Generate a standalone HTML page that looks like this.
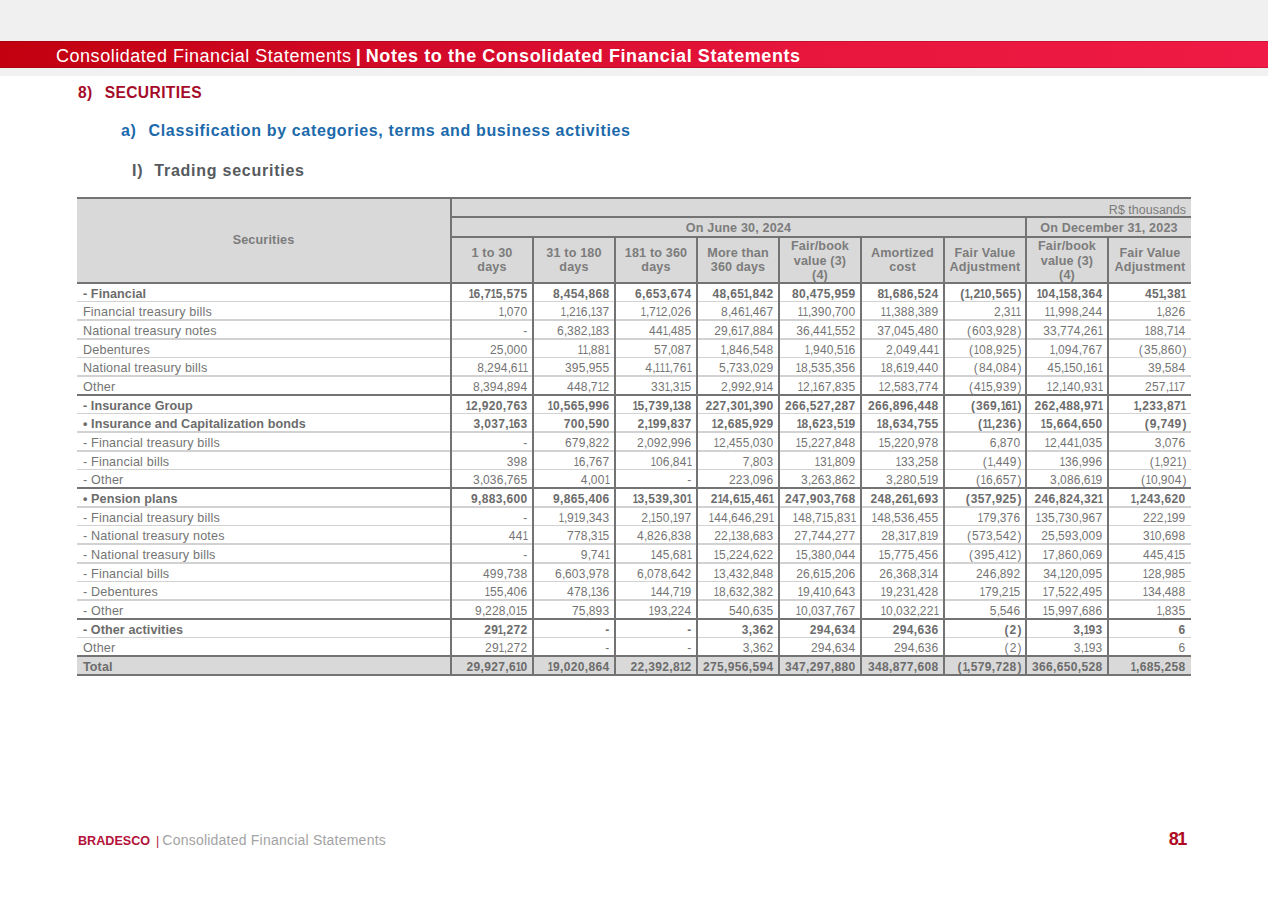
<!DOCTYPE html>
<html><head><meta charset="utf-8"><style>
*{margin:0;padding:0;box-sizing:border-box}
html,body{width:1268px;height:899px;overflow:hidden;background:#fff;position:relative}
body{font-family:"Liberation Sans",sans-serif;}
.a{position:absolute;white-space:nowrap}
.hl{position:absolute;left:77px;width:1114px}
.vl{position:absolute;width:2px;background:#737373}
.lab{position:absolute;left:83px;font-size:12.6px;color:#747474;white-space:nowrap;line-height:15px;letter-spacing:0.18px}
.lab.b{letter-spacing:0.08px}
.num{position:absolute;font-size:12px;color:#747474;white-space:nowrap;text-align:right;line-height:15px;letter-spacing:0.26px}
.num i{font-style:normal}
.num .o{display:inline-block;transform:scaleX(0.8);margin:0 -0.9px;letter-spacing:0}
.num .c{letter-spacing:-0.41px}
.num .po{letter-spacing:1.1px}
.num .pc{margin-left:1px;letter-spacing:-1.1px}
.b{font-weight:bold;color:#6c6c6c}
.nb{letter-spacing:0.33px}
.nb .o{margin:0 -1.15px}
.nb .c{letter-spacing:0.4px}

.hd{position:absolute;font-size:12.6px;font-weight:bold;color:#7c7c7c;text-align:center;line-height:14.5px;white-space:nowrap;letter-spacing:0.15px}
</style></head><body>

<div class="a" style="left:0;top:0;width:1268px;height:41px;background:#f0f0f0"></div>
<div class="a" style="left:0;top:41px;width:1268px;height:27px;background:linear-gradient(90deg,#c2000f 0%,#d40a2a 35%,#e8163d 65%,#ef1a45 100%);box-shadow:inset 0 1px 0 rgba(90,0,10,.22),inset 0 -1px 0 rgba(90,0,10,.22)"></div>
<div class="a" style="left:0;top:68px;width:1268px;height:8px;background:#f1f1f1"></div>
<div class="a" style="left:56px;top:45px;line-height:22px;font-size:18px;color:#fff;letter-spacing:0.53px">Consolidated Financial Statements<span style="margin-left:4px;font-weight:bold">|</span><b style="letter-spacing:0.585px;margin-left:4.5px">Notes to the Consolidated Financial Statements</b></div>
<div class="a" style="left:78px;top:83.6px;line-height:18px;font-size:15.6px;font-weight:bold;color:#a50c29;letter-spacing:0.38px">8)<span style="display:inline-block;width:12px"></span>SECURITIES</div>
<div class="a" style="left:121px;top:121px;line-height:20px;font-size:16px;font-weight:bold;color:#1c6aab;letter-spacing:0.65px">a)<span style="display:inline-block;width:12px"></span>Classification by categories, terms and business activities</div>
<div class="a" style="left:132px;top:160.5px;line-height:20px;font-size:16px;font-weight:bold;color:#565a5e;letter-spacing:0.75px">I)<span style="display:inline-block;width:11px"></span>Trading securities</div>
<div class="a" style="left:77px;top:197px;width:1114px;height:86px;background:#d9d9d9"></div>
<div class="a" style="left:77px;top:655px;width:1114px;height:20px;background:#d9d9d9"></div>
<div class="hl" style="top:197px;height:2px;background:#737373"></div>
<div class="a" style="left:450px;top:216px;width:741px;height:2px;background:#737373"></div>
<div class="a" style="left:450px;top:236px;width:741px;height:2px;background:#737373"></div>
<div class="hl" style="top:282px;height:2px;background:#737373"></div>
<div class="hl" style="top:300.67px;height:1.5px;background:#d2d2d2"></div>
<div class="hl" style="top:319.34px;height:1.5px;background:#d2d2d2"></div>
<div class="hl" style="top:338.01px;height:1.5px;background:#d2d2d2"></div>
<div class="hl" style="top:356.68px;height:1.5px;background:#d2d2d2"></div>
<div class="hl" style="top:375.35px;height:1.5px;background:#d2d2d2"></div>
<div class="hl" style="top:393.52px;height:2px;background:#737373"></div>
<div class="hl" style="top:412.69px;height:1.5px;background:#d2d2d2"></div>
<div class="hl" style="top:431.36px;height:1.5px;background:#d2d2d2"></div>
<div class="hl" style="top:450.03px;height:1.5px;background:#d2d2d2"></div>
<div class="hl" style="top:468.70px;height:1.5px;background:#d2d2d2"></div>
<div class="hl" style="top:486.87px;height:2px;background:#737373"></div>
<div class="hl" style="top:506.04px;height:1.5px;background:#d2d2d2"></div>
<div class="hl" style="top:524.71px;height:1.5px;background:#d2d2d2"></div>
<div class="hl" style="top:543.38px;height:1.5px;background:#d2d2d2"></div>
<div class="hl" style="top:562.05px;height:1.5px;background:#d2d2d2"></div>
<div class="hl" style="top:580.72px;height:1.5px;background:#d2d2d2"></div>
<div class="hl" style="top:599.39px;height:1.5px;background:#d2d2d2"></div>
<div class="hl" style="top:617.56px;height:2px;background:#737373"></div>
<div class="hl" style="top:636.73px;height:1.5px;background:#d2d2d2"></div>
<div class="hl" style="top:654.90px;height:2px;background:#737373"></div>
<div class="hl" style="top:673.57px;height:2px;background:#737373"></div>
<div class="vl" style="left:450px;top:197px;height:479px"></div>
<div class="vl" style="left:532px;top:236px;height:440px"></div>
<div class="vl" style="left:614px;top:236px;height:440px"></div>
<div class="vl" style="left:696px;top:236px;height:440px"></div>
<div class="vl" style="left:778px;top:236px;height:440px"></div>
<div class="vl" style="left:860px;top:236px;height:440px"></div>
<div class="vl" style="left:943px;top:236px;height:440px"></div>
<div class="vl" style="left:1025px;top:216px;height:460px"></div>
<div class="vl" style="left:1107px;top:236px;height:440px"></div>
<div class="hd" style="left:77px;top:233px;width:373px">Securities</div>
<div class="a" style="left:1000px;top:203.3px;width:186px;text-align:right;font-size:12.5px;color:#7c7c7c;line-height:14px">R$ thousands</div>
<div class="hd" style="left:452px;top:220.7px;width:573px">On June 30, 2024</div>
<div class="hd" style="left:1027px;top:220.7px;width:164px">On December 31, 2023</div>
<div class="hd" style="left:452px;top:245.8px;width:80px">1 to 30<br>days</div>
<div class="hd" style="left:534px;top:245.8px;width:80px">31 to 180<br>days</div>
<div class="hd" style="left:616px;top:245.8px;width:80px">181 to 360<br>days</div>
<div class="hd" style="left:698px;top:245.8px;width:80px">More than<br>360 days</div>
<div class="hd" style="left:780px;top:239.05px;width:80px">Fair/book<br>value (3)<br>(4)</div>
<div class="hd" style="left:862px;top:245.8px;width:81px">Amortized<br>cost</div>
<div class="hd" style="left:945px;top:245.8px;width:80px">Fair Value<br>Adjustment</div>
<div class="hd" style="left:1027px;top:239.05px;width:80px">Fair/book<br>value (3)<br>(4)</div>
<div class="hd" style="left:1109px;top:245.8px;width:82px">Fair Value<br>Adjustment</div>
<div class="lab b" style="top:286.50px">- Financial</div>
<div class="num b nb" style="top:286.50px;left:450px;width:77.5px"><i class="o">1</i>6<i class="c">,</i>7<i class="o">1</i>5<i class="c">,</i>575</div>
<div class="num b nb" style="top:286.50px;left:532px;width:77.5px">8<i class="c">,</i>454<i class="c">,</i>868</div>
<div class="num b nb" style="top:286.50px;left:614px;width:77.5px">6<i class="c">,</i>653<i class="c">,</i>674</div>
<div class="num b nb" style="top:286.50px;left:696px;width:77.5px">48<i class="c">,</i>65<i class="o">1</i><i class="c">,</i>842</div>
<div class="num b nb" style="top:286.50px;left:778px;width:77.5px">80<i class="c">,</i>475<i class="c">,</i>959</div>
<div class="num b nb" style="top:286.50px;left:860px;width:78.5px">8<i class="o">1</i><i class="c">,</i>686<i class="c">,</i>524</div>
<div class="num b nb" style="top:286.50px;left:943px;width:77.5px"><i class="po">(</i><i class="o">1</i><i class="c">,</i>2<i class="o">1</i>0<i class="c">,</i>565<i class="pc">)</i></div>
<div class="num b nb" style="top:286.50px;left:1025px;width:77.5px"><i class="o">1</i>04<i class="c">,</i><i class="o">1</i>58<i class="c">,</i>364</div>
<div class="num b nb" style="top:286.50px;left:1107px;width:78.5px">45<i class="o">1</i><i class="c">,</i>38<i class="o">1</i></div>
<div class="lab" style="top:305.17px">Financial treasury bills</div>
<div class="num" style="top:305.17px;left:450px;width:77.5px"><i class="o">1</i><i class="c">,</i>070</div>
<div class="num" style="top:305.17px;left:532px;width:77.5px"><i class="o">1</i><i class="c">,</i>2<i class="o">1</i>6<i class="c">,</i><i class="o">1</i>37</div>
<div class="num" style="top:305.17px;left:614px;width:77.5px"><i class="o">1</i><i class="c">,</i>7<i class="o">1</i>2<i class="c">,</i>026</div>
<div class="num" style="top:305.17px;left:696px;width:77.5px">8<i class="c">,</i>46<i class="o">1</i><i class="c">,</i>467</div>
<div class="num" style="top:305.17px;left:778px;width:77.5px"><i class="o">1</i><i class="o">1</i><i class="c">,</i>390<i class="c">,</i>700</div>
<div class="num" style="top:305.17px;left:860px;width:78.5px"><i class="o">1</i><i class="o">1</i><i class="c">,</i>388<i class="c">,</i>389</div>
<div class="num" style="top:305.17px;left:943px;width:77.5px">2<i class="c">,</i>3<i class="o">1</i><i class="o">1</i></div>
<div class="num" style="top:305.17px;left:1025px;width:77.5px"><i class="o">1</i><i class="o">1</i><i class="c">,</i>998<i class="c">,</i>244</div>
<div class="num" style="top:305.17px;left:1107px;width:78.5px"><i class="o">1</i><i class="c">,</i>826</div>
<div class="lab" style="top:323.84px">National treasury notes</div>
<div class="num" style="top:323.84px;left:450px;width:77.5px">-</div>
<div class="num" style="top:323.84px;left:532px;width:77.5px">6<i class="c">,</i>382<i class="c">,</i><i class="o">1</i>83</div>
<div class="num" style="top:323.84px;left:614px;width:77.5px">44<i class="o">1</i><i class="c">,</i>485</div>
<div class="num" style="top:323.84px;left:696px;width:77.5px">29<i class="c">,</i>6<i class="o">1</i>7<i class="c">,</i>884</div>
<div class="num" style="top:323.84px;left:778px;width:77.5px">36<i class="c">,</i>44<i class="o">1</i><i class="c">,</i>552</div>
<div class="num" style="top:323.84px;left:860px;width:78.5px">37<i class="c">,</i>045<i class="c">,</i>480</div>
<div class="num" style="top:323.84px;left:943px;width:77.5px"><i class="po">(</i>603<i class="c">,</i>928<i class="pc">)</i></div>
<div class="num" style="top:323.84px;left:1025px;width:77.5px">33<i class="c">,</i>774<i class="c">,</i>26<i class="o">1</i></div>
<div class="num" style="top:323.84px;left:1107px;width:78.5px"><i class="o">1</i>88<i class="c">,</i>7<i class="o">1</i>4</div>
<div class="lab" style="top:342.51px">Debentures</div>
<div class="num" style="top:342.51px;left:450px;width:77.5px">25<i class="c">,</i>000</div>
<div class="num" style="top:342.51px;left:532px;width:77.5px"><i class="o">1</i><i class="o">1</i><i class="c">,</i>88<i class="o">1</i></div>
<div class="num" style="top:342.51px;left:614px;width:77.5px">57<i class="c">,</i>087</div>
<div class="num" style="top:342.51px;left:696px;width:77.5px"><i class="o">1</i><i class="c">,</i>846<i class="c">,</i>548</div>
<div class="num" style="top:342.51px;left:778px;width:77.5px"><i class="o">1</i><i class="c">,</i>940<i class="c">,</i>5<i class="o">1</i>6</div>
<div class="num" style="top:342.51px;left:860px;width:78.5px">2<i class="c">,</i>049<i class="c">,</i>44<i class="o">1</i></div>
<div class="num" style="top:342.51px;left:943px;width:77.5px"><i class="po">(</i><i class="o">1</i>08<i class="c">,</i>925<i class="pc">)</i></div>
<div class="num" style="top:342.51px;left:1025px;width:77.5px"><i class="o">1</i><i class="c">,</i>094<i class="c">,</i>767</div>
<div class="num" style="top:342.51px;left:1107px;width:78.5px"><i class="po">(</i>35<i class="c">,</i>860<i class="pc">)</i></div>
<div class="lab" style="top:361.18px">National treasury bills</div>
<div class="num" style="top:361.18px;left:450px;width:77.5px">8<i class="c">,</i>294<i class="c">,</i>6<i class="o">1</i><i class="o">1</i></div>
<div class="num" style="top:361.18px;left:532px;width:77.5px">395<i class="c">,</i>955</div>
<div class="num" style="top:361.18px;left:614px;width:77.5px">4<i class="c">,</i><i class="o">1</i><i class="o">1</i><i class="o">1</i><i class="c">,</i>76<i class="o">1</i></div>
<div class="num" style="top:361.18px;left:696px;width:77.5px">5<i class="c">,</i>733<i class="c">,</i>029</div>
<div class="num" style="top:361.18px;left:778px;width:77.5px"><i class="o">1</i>8<i class="c">,</i>535<i class="c">,</i>356</div>
<div class="num" style="top:361.18px;left:860px;width:78.5px"><i class="o">1</i>8<i class="c">,</i>6<i class="o">1</i>9<i class="c">,</i>440</div>
<div class="num" style="top:361.18px;left:943px;width:77.5px"><i class="po">(</i>84<i class="c">,</i>084<i class="pc">)</i></div>
<div class="num" style="top:361.18px;left:1025px;width:77.5px">45<i class="c">,</i><i class="o">1</i>50<i class="c">,</i><i class="o">1</i>6<i class="o">1</i></div>
<div class="num" style="top:361.18px;left:1107px;width:78.5px">39<i class="c">,</i>584</div>
<div class="lab" style="top:379.85px">Other</div>
<div class="num" style="top:379.85px;left:450px;width:77.5px">8<i class="c">,</i>394<i class="c">,</i>894</div>
<div class="num" style="top:379.85px;left:532px;width:77.5px">448<i class="c">,</i>7<i class="o">1</i>2</div>
<div class="num" style="top:379.85px;left:614px;width:77.5px">33<i class="o">1</i><i class="c">,</i>3<i class="o">1</i>5</div>
<div class="num" style="top:379.85px;left:696px;width:77.5px">2<i class="c">,</i>992<i class="c">,</i>9<i class="o">1</i>4</div>
<div class="num" style="top:379.85px;left:778px;width:77.5px"><i class="o">1</i>2<i class="c">,</i><i class="o">1</i>67<i class="c">,</i>835</div>
<div class="num" style="top:379.85px;left:860px;width:78.5px"><i class="o">1</i>2<i class="c">,</i>583<i class="c">,</i>774</div>
<div class="num" style="top:379.85px;left:943px;width:77.5px"><i class="po">(</i>4<i class="o">1</i>5<i class="c">,</i>939<i class="pc">)</i></div>
<div class="num" style="top:379.85px;left:1025px;width:77.5px"><i class="o">1</i>2<i class="c">,</i><i class="o">1</i>40<i class="c">,</i>93<i class="o">1</i></div>
<div class="num" style="top:379.85px;left:1107px;width:78.5px">257<i class="c">,</i><i class="o">1</i><i class="o">1</i>7</div>
<div class="lab b" style="top:398.52px">- Insurance Group</div>
<div class="num b nb" style="top:398.52px;left:450px;width:77.5px"><i class="o">1</i>2<i class="c">,</i>920<i class="c">,</i>763</div>
<div class="num b nb" style="top:398.52px;left:532px;width:77.5px"><i class="o">1</i>0<i class="c">,</i>565<i class="c">,</i>996</div>
<div class="num b nb" style="top:398.52px;left:614px;width:77.5px"><i class="o">1</i>5<i class="c">,</i>739<i class="c">,</i><i class="o">1</i>38</div>
<div class="num b nb" style="top:398.52px;left:696px;width:77.5px">227<i class="c">,</i>30<i class="o">1</i><i class="c">,</i>390</div>
<div class="num b nb" style="top:398.52px;left:778px;width:77.5px">266<i class="c">,</i>527<i class="c">,</i>287</div>
<div class="num b nb" style="top:398.52px;left:860px;width:78.5px">266<i class="c">,</i>896<i class="c">,</i>448</div>
<div class="num b nb" style="top:398.52px;left:943px;width:77.5px"><i class="po">(</i>369<i class="c">,</i><i class="o">1</i>6<i class="o">1</i><i class="pc">)</i></div>
<div class="num b nb" style="top:398.52px;left:1025px;width:77.5px">262<i class="c">,</i>488<i class="c">,</i>97<i class="o">1</i></div>
<div class="num b nb" style="top:398.52px;left:1107px;width:78.5px"><i class="o">1</i><i class="c">,</i>233<i class="c">,</i>87<i class="o">1</i></div>
<div class="lab b" style="top:417.19px">&bull; Insurance and Capitalization bonds</div>
<div class="num b nb" style="top:417.19px;left:450px;width:77.5px">3<i class="c">,</i>037<i class="c">,</i><i class="o">1</i>63</div>
<div class="num b nb" style="top:417.19px;left:532px;width:77.5px">700<i class="c">,</i>590</div>
<div class="num b nb" style="top:417.19px;left:614px;width:77.5px">2<i class="c">,</i><i class="o">1</i>99<i class="c">,</i>837</div>
<div class="num b nb" style="top:417.19px;left:696px;width:77.5px"><i class="o">1</i>2<i class="c">,</i>685<i class="c">,</i>929</div>
<div class="num b nb" style="top:417.19px;left:778px;width:77.5px"><i class="o">1</i>8<i class="c">,</i>623<i class="c">,</i>5<i class="o">1</i>9</div>
<div class="num b nb" style="top:417.19px;left:860px;width:78.5px"><i class="o">1</i>8<i class="c">,</i>634<i class="c">,</i>755</div>
<div class="num b nb" style="top:417.19px;left:943px;width:77.5px"><i class="po">(</i><i class="o">1</i><i class="o">1</i><i class="c">,</i>236<i class="pc">)</i></div>
<div class="num b nb" style="top:417.19px;left:1025px;width:77.5px"><i class="o">1</i>5<i class="c">,</i>664<i class="c">,</i>650</div>
<div class="num b nb" style="top:417.19px;left:1107px;width:78.5px"><i class="po">(</i>9<i class="c">,</i>749<i class="pc">)</i></div>
<div class="lab" style="top:435.86px">- Financial treasury bills</div>
<div class="num" style="top:435.86px;left:450px;width:77.5px">-</div>
<div class="num" style="top:435.86px;left:532px;width:77.5px">679<i class="c">,</i>822</div>
<div class="num" style="top:435.86px;left:614px;width:77.5px">2<i class="c">,</i>092<i class="c">,</i>996</div>
<div class="num" style="top:435.86px;left:696px;width:77.5px"><i class="o">1</i>2<i class="c">,</i>455<i class="c">,</i>030</div>
<div class="num" style="top:435.86px;left:778px;width:77.5px"><i class="o">1</i>5<i class="c">,</i>227<i class="c">,</i>848</div>
<div class="num" style="top:435.86px;left:860px;width:78.5px"><i class="o">1</i>5<i class="c">,</i>220<i class="c">,</i>978</div>
<div class="num" style="top:435.86px;left:943px;width:77.5px">6<i class="c">,</i>870</div>
<div class="num" style="top:435.86px;left:1025px;width:77.5px"><i class="o">1</i>2<i class="c">,</i>44<i class="o">1</i><i class="c">,</i>035</div>
<div class="num" style="top:435.86px;left:1107px;width:78.5px">3<i class="c">,</i>076</div>
<div class="lab" style="top:454.53px">- Financial bills</div>
<div class="num" style="top:454.53px;left:450px;width:77.5px">398</div>
<div class="num" style="top:454.53px;left:532px;width:77.5px"><i class="o">1</i>6<i class="c">,</i>767</div>
<div class="num" style="top:454.53px;left:614px;width:77.5px"><i class="o">1</i>06<i class="c">,</i>84<i class="o">1</i></div>
<div class="num" style="top:454.53px;left:696px;width:77.5px">7<i class="c">,</i>803</div>
<div class="num" style="top:454.53px;left:778px;width:77.5px"><i class="o">1</i>3<i class="o">1</i><i class="c">,</i>809</div>
<div class="num" style="top:454.53px;left:860px;width:78.5px"><i class="o">1</i>33<i class="c">,</i>258</div>
<div class="num" style="top:454.53px;left:943px;width:77.5px"><i class="po">(</i><i class="o">1</i><i class="c">,</i>449<i class="pc">)</i></div>
<div class="num" style="top:454.53px;left:1025px;width:77.5px"><i class="o">1</i>36<i class="c">,</i>996</div>
<div class="num" style="top:454.53px;left:1107px;width:78.5px"><i class="po">(</i><i class="o">1</i><i class="c">,</i>92<i class="o">1</i><i class="pc">)</i></div>
<div class="lab" style="top:473.20px">- Other</div>
<div class="num" style="top:473.20px;left:450px;width:77.5px">3<i class="c">,</i>036<i class="c">,</i>765</div>
<div class="num" style="top:473.20px;left:532px;width:77.5px">4<i class="c">,</i>00<i class="o">1</i></div>
<div class="num" style="top:473.20px;left:614px;width:77.5px">-</div>
<div class="num" style="top:473.20px;left:696px;width:77.5px">223<i class="c">,</i>096</div>
<div class="num" style="top:473.20px;left:778px;width:77.5px">3<i class="c">,</i>263<i class="c">,</i>862</div>
<div class="num" style="top:473.20px;left:860px;width:78.5px">3<i class="c">,</i>280<i class="c">,</i>5<i class="o">1</i>9</div>
<div class="num" style="top:473.20px;left:943px;width:77.5px"><i class="po">(</i><i class="o">1</i>6<i class="c">,</i>657<i class="pc">)</i></div>
<div class="num" style="top:473.20px;left:1025px;width:77.5px">3<i class="c">,</i>086<i class="c">,</i>6<i class="o">1</i>9</div>
<div class="num" style="top:473.20px;left:1107px;width:78.5px"><i class="po">(</i><i class="o">1</i>0<i class="c">,</i>904<i class="pc">)</i></div>
<div class="lab b" style="top:491.87px">&bull; Pension plans</div>
<div class="num b nb" style="top:491.87px;left:450px;width:77.5px">9<i class="c">,</i>883<i class="c">,</i>600</div>
<div class="num b nb" style="top:491.87px;left:532px;width:77.5px">9<i class="c">,</i>865<i class="c">,</i>406</div>
<div class="num b nb" style="top:491.87px;left:614px;width:77.5px"><i class="o">1</i>3<i class="c">,</i>539<i class="c">,</i>30<i class="o">1</i></div>
<div class="num b nb" style="top:491.87px;left:696px;width:77.5px">2<i class="o">1</i>4<i class="c">,</i>6<i class="o">1</i>5<i class="c">,</i>46<i class="o">1</i></div>
<div class="num b nb" style="top:491.87px;left:778px;width:77.5px">247<i class="c">,</i>903<i class="c">,</i>768</div>
<div class="num b nb" style="top:491.87px;left:860px;width:78.5px">248<i class="c">,</i>26<i class="o">1</i><i class="c">,</i>693</div>
<div class="num b nb" style="top:491.87px;left:943px;width:77.5px"><i class="po">(</i>357<i class="c">,</i>925<i class="pc">)</i></div>
<div class="num b nb" style="top:491.87px;left:1025px;width:77.5px">246<i class="c">,</i>824<i class="c">,</i>32<i class="o">1</i></div>
<div class="num b nb" style="top:491.87px;left:1107px;width:78.5px"><i class="o">1</i><i class="c">,</i>243<i class="c">,</i>620</div>
<div class="lab" style="top:510.54px">- Financial treasury bills</div>
<div class="num" style="top:510.54px;left:450px;width:77.5px">-</div>
<div class="num" style="top:510.54px;left:532px;width:77.5px"><i class="o">1</i><i class="c">,</i>9<i class="o">1</i>9<i class="c">,</i>343</div>
<div class="num" style="top:510.54px;left:614px;width:77.5px">2<i class="c">,</i><i class="o">1</i>50<i class="c">,</i><i class="o">1</i>97</div>
<div class="num" style="top:510.54px;left:696px;width:77.5px"><i class="o">1</i>44<i class="c">,</i>646<i class="c">,</i>29<i class="o">1</i></div>
<div class="num" style="top:510.54px;left:778px;width:77.5px"><i class="o">1</i>48<i class="c">,</i>7<i class="o">1</i>5<i class="c">,</i>83<i class="o">1</i></div>
<div class="num" style="top:510.54px;left:860px;width:78.5px"><i class="o">1</i>48<i class="c">,</i>536<i class="c">,</i>455</div>
<div class="num" style="top:510.54px;left:943px;width:77.5px"><i class="o">1</i>79<i class="c">,</i>376</div>
<div class="num" style="top:510.54px;left:1025px;width:77.5px"><i class="o">1</i>35<i class="c">,</i>730<i class="c">,</i>967</div>
<div class="num" style="top:510.54px;left:1107px;width:78.5px">222<i class="c">,</i><i class="o">1</i>99</div>
<div class="lab" style="top:529.21px">- National treasury notes</div>
<div class="num" style="top:529.21px;left:450px;width:77.5px">44<i class="o">1</i></div>
<div class="num" style="top:529.21px;left:532px;width:77.5px">778<i class="c">,</i>3<i class="o">1</i>5</div>
<div class="num" style="top:529.21px;left:614px;width:77.5px">4<i class="c">,</i>826<i class="c">,</i>838</div>
<div class="num" style="top:529.21px;left:696px;width:77.5px">22<i class="c">,</i><i class="o">1</i>38<i class="c">,</i>683</div>
<div class="num" style="top:529.21px;left:778px;width:77.5px">27<i class="c">,</i>744<i class="c">,</i>277</div>
<div class="num" style="top:529.21px;left:860px;width:78.5px">28<i class="c">,</i>3<i class="o">1</i>7<i class="c">,</i>8<i class="o">1</i>9</div>
<div class="num" style="top:529.21px;left:943px;width:77.5px"><i class="po">(</i>573<i class="c">,</i>542<i class="pc">)</i></div>
<div class="num" style="top:529.21px;left:1025px;width:77.5px">25<i class="c">,</i>593<i class="c">,</i>009</div>
<div class="num" style="top:529.21px;left:1107px;width:78.5px">3<i class="o">1</i>0<i class="c">,</i>698</div>
<div class="lab" style="top:547.88px">- National treasury bills</div>
<div class="num" style="top:547.88px;left:450px;width:77.5px">-</div>
<div class="num" style="top:547.88px;left:532px;width:77.5px">9<i class="c">,</i>74<i class="o">1</i></div>
<div class="num" style="top:547.88px;left:614px;width:77.5px"><i class="o">1</i>45<i class="c">,</i>68<i class="o">1</i></div>
<div class="num" style="top:547.88px;left:696px;width:77.5px"><i class="o">1</i>5<i class="c">,</i>224<i class="c">,</i>622</div>
<div class="num" style="top:547.88px;left:778px;width:77.5px"><i class="o">1</i>5<i class="c">,</i>380<i class="c">,</i>044</div>
<div class="num" style="top:547.88px;left:860px;width:78.5px"><i class="o">1</i>5<i class="c">,</i>775<i class="c">,</i>456</div>
<div class="num" style="top:547.88px;left:943px;width:77.5px"><i class="po">(</i>395<i class="c">,</i>4<i class="o">1</i>2<i class="pc">)</i></div>
<div class="num" style="top:547.88px;left:1025px;width:77.5px"><i class="o">1</i>7<i class="c">,</i>860<i class="c">,</i>069</div>
<div class="num" style="top:547.88px;left:1107px;width:78.5px">445<i class="c">,</i>4<i class="o">1</i>5</div>
<div class="lab" style="top:566.55px">- Financial bills</div>
<div class="num" style="top:566.55px;left:450px;width:77.5px">499<i class="c">,</i>738</div>
<div class="num" style="top:566.55px;left:532px;width:77.5px">6<i class="c">,</i>603<i class="c">,</i>978</div>
<div class="num" style="top:566.55px;left:614px;width:77.5px">6<i class="c">,</i>078<i class="c">,</i>642</div>
<div class="num" style="top:566.55px;left:696px;width:77.5px"><i class="o">1</i>3<i class="c">,</i>432<i class="c">,</i>848</div>
<div class="num" style="top:566.55px;left:778px;width:77.5px">26<i class="c">,</i>6<i class="o">1</i>5<i class="c">,</i>206</div>
<div class="num" style="top:566.55px;left:860px;width:78.5px">26<i class="c">,</i>368<i class="c">,</i>3<i class="o">1</i>4</div>
<div class="num" style="top:566.55px;left:943px;width:77.5px">246<i class="c">,</i>892</div>
<div class="num" style="top:566.55px;left:1025px;width:77.5px">34<i class="c">,</i><i class="o">1</i>20<i class="c">,</i>095</div>
<div class="num" style="top:566.55px;left:1107px;width:78.5px"><i class="o">1</i>28<i class="c">,</i>985</div>
<div class="lab" style="top:585.22px">- Debentures</div>
<div class="num" style="top:585.22px;left:450px;width:77.5px"><i class="o">1</i>55<i class="c">,</i>406</div>
<div class="num" style="top:585.22px;left:532px;width:77.5px">478<i class="c">,</i><i class="o">1</i>36</div>
<div class="num" style="top:585.22px;left:614px;width:77.5px"><i class="o">1</i>44<i class="c">,</i>7<i class="o">1</i>9</div>
<div class="num" style="top:585.22px;left:696px;width:77.5px"><i class="o">1</i>8<i class="c">,</i>632<i class="c">,</i>382</div>
<div class="num" style="top:585.22px;left:778px;width:77.5px"><i class="o">1</i>9<i class="c">,</i>4<i class="o">1</i>0<i class="c">,</i>643</div>
<div class="num" style="top:585.22px;left:860px;width:78.5px"><i class="o">1</i>9<i class="c">,</i>23<i class="o">1</i><i class="c">,</i>428</div>
<div class="num" style="top:585.22px;left:943px;width:77.5px"><i class="o">1</i>79<i class="c">,</i>2<i class="o">1</i>5</div>
<div class="num" style="top:585.22px;left:1025px;width:77.5px"><i class="o">1</i>7<i class="c">,</i>522<i class="c">,</i>495</div>
<div class="num" style="top:585.22px;left:1107px;width:78.5px"><i class="o">1</i>34<i class="c">,</i>488</div>
<div class="lab" style="top:603.89px">- Other</div>
<div class="num" style="top:603.89px;left:450px;width:77.5px">9<i class="c">,</i>228<i class="c">,</i>0<i class="o">1</i>5</div>
<div class="num" style="top:603.89px;left:532px;width:77.5px">75<i class="c">,</i>893</div>
<div class="num" style="top:603.89px;left:614px;width:77.5px"><i class="o">1</i>93<i class="c">,</i>224</div>
<div class="num" style="top:603.89px;left:696px;width:77.5px">540<i class="c">,</i>635</div>
<div class="num" style="top:603.89px;left:778px;width:77.5px"><i class="o">1</i>0<i class="c">,</i>037<i class="c">,</i>767</div>
<div class="num" style="top:603.89px;left:860px;width:78.5px"><i class="o">1</i>0<i class="c">,</i>032<i class="c">,</i>22<i class="o">1</i></div>
<div class="num" style="top:603.89px;left:943px;width:77.5px">5<i class="c">,</i>546</div>
<div class="num" style="top:603.89px;left:1025px;width:77.5px"><i class="o">1</i>5<i class="c">,</i>997<i class="c">,</i>686</div>
<div class="num" style="top:603.89px;left:1107px;width:78.5px"><i class="o">1</i><i class="c">,</i>835</div>
<div class="lab b" style="top:622.56px">- Other activities</div>
<div class="num b nb" style="top:622.56px;left:450px;width:77.5px">29<i class="o">1</i><i class="c">,</i>272</div>
<div class="num b nb" style="top:622.56px;left:532px;width:77.5px">-</div>
<div class="num b nb" style="top:622.56px;left:614px;width:77.5px">-</div>
<div class="num b nb" style="top:622.56px;left:696px;width:77.5px">3<i class="c">,</i>362</div>
<div class="num b nb" style="top:622.56px;left:778px;width:77.5px">294<i class="c">,</i>634</div>
<div class="num b nb" style="top:622.56px;left:860px;width:78.5px">294<i class="c">,</i>636</div>
<div class="num b nb" style="top:622.56px;left:943px;width:77.5px"><i class="po">(</i>2<i class="pc">)</i></div>
<div class="num b nb" style="top:622.56px;left:1025px;width:77.5px">3<i class="c">,</i><i class="o">1</i>93</div>
<div class="num b nb" style="top:622.56px;left:1107px;width:78.5px">6</div>
<div class="lab" style="top:641.23px">Other</div>
<div class="num" style="top:641.23px;left:450px;width:77.5px">29<i class="o">1</i><i class="c">,</i>272</div>
<div class="num" style="top:641.23px;left:532px;width:77.5px">-</div>
<div class="num" style="top:641.23px;left:614px;width:77.5px">-</div>
<div class="num" style="top:641.23px;left:696px;width:77.5px">3<i class="c">,</i>362</div>
<div class="num" style="top:641.23px;left:778px;width:77.5px">294<i class="c">,</i>634</div>
<div class="num" style="top:641.23px;left:860px;width:78.5px">294<i class="c">,</i>636</div>
<div class="num" style="top:641.23px;left:943px;width:77.5px"><i class="po">(</i>2<i class="pc">)</i></div>
<div class="num" style="top:641.23px;left:1025px;width:77.5px">3<i class="c">,</i><i class="o">1</i>93</div>
<div class="num" style="top:641.23px;left:1107px;width:78.5px">6</div>
<div class="lab b" style="top:659.90px">Total</div>
<div class="num b nb" style="top:659.90px;left:450px;width:77.5px">29<i class="c">,</i>927<i class="c">,</i>6<i class="o">1</i>0</div>
<div class="num b nb" style="top:659.90px;left:532px;width:77.5px"><i class="o">1</i>9<i class="c">,</i>020<i class="c">,</i>864</div>
<div class="num b nb" style="top:659.90px;left:614px;width:77.5px">22<i class="c">,</i>392<i class="c">,</i>8<i class="o">1</i>2</div>
<div class="num b nb" style="top:659.90px;left:696px;width:77.5px">275<i class="c">,</i>956<i class="c">,</i>594</div>
<div class="num b nb" style="top:659.90px;left:778px;width:77.5px">347<i class="c">,</i>297<i class="c">,</i>880</div>
<div class="num b nb" style="top:659.90px;left:860px;width:78.5px">348<i class="c">,</i>877<i class="c">,</i>608</div>
<div class="num b nb" style="top:659.90px;left:943px;width:77.5px"><i class="po">(</i><i class="o">1</i><i class="c">,</i>579<i class="c">,</i>728<i class="pc">)</i></div>
<div class="num b nb" style="top:659.90px;left:1025px;width:77.5px">366<i class="c">,</i>650<i class="c">,</i>528</div>
<div class="num b nb" style="top:659.90px;left:1107px;width:78.5px"><i class="o">1</i><i class="c">,</i>685<i class="c">,</i>258</div>
<div class="a" style="left:78px;top:831px;line-height:18px;font-size:12.6px;font-weight:bold;color:#b3123a">BRADESCO<span style="font-weight:normal;margin-left:6px">|</span><span style="font-weight:normal;color:#a3a3a3;font-size:14px;letter-spacing:0.22px;margin-left:3px">Consolidated Financial Statements</span></div>
<div class="a" style="left:1150px;top:829px;width:35.6px;text-align:right;line-height:20px;font-size:18px;font-weight:bold;color:#ae0a22;letter-spacing:-1.6px">81</div>
</body></html>
